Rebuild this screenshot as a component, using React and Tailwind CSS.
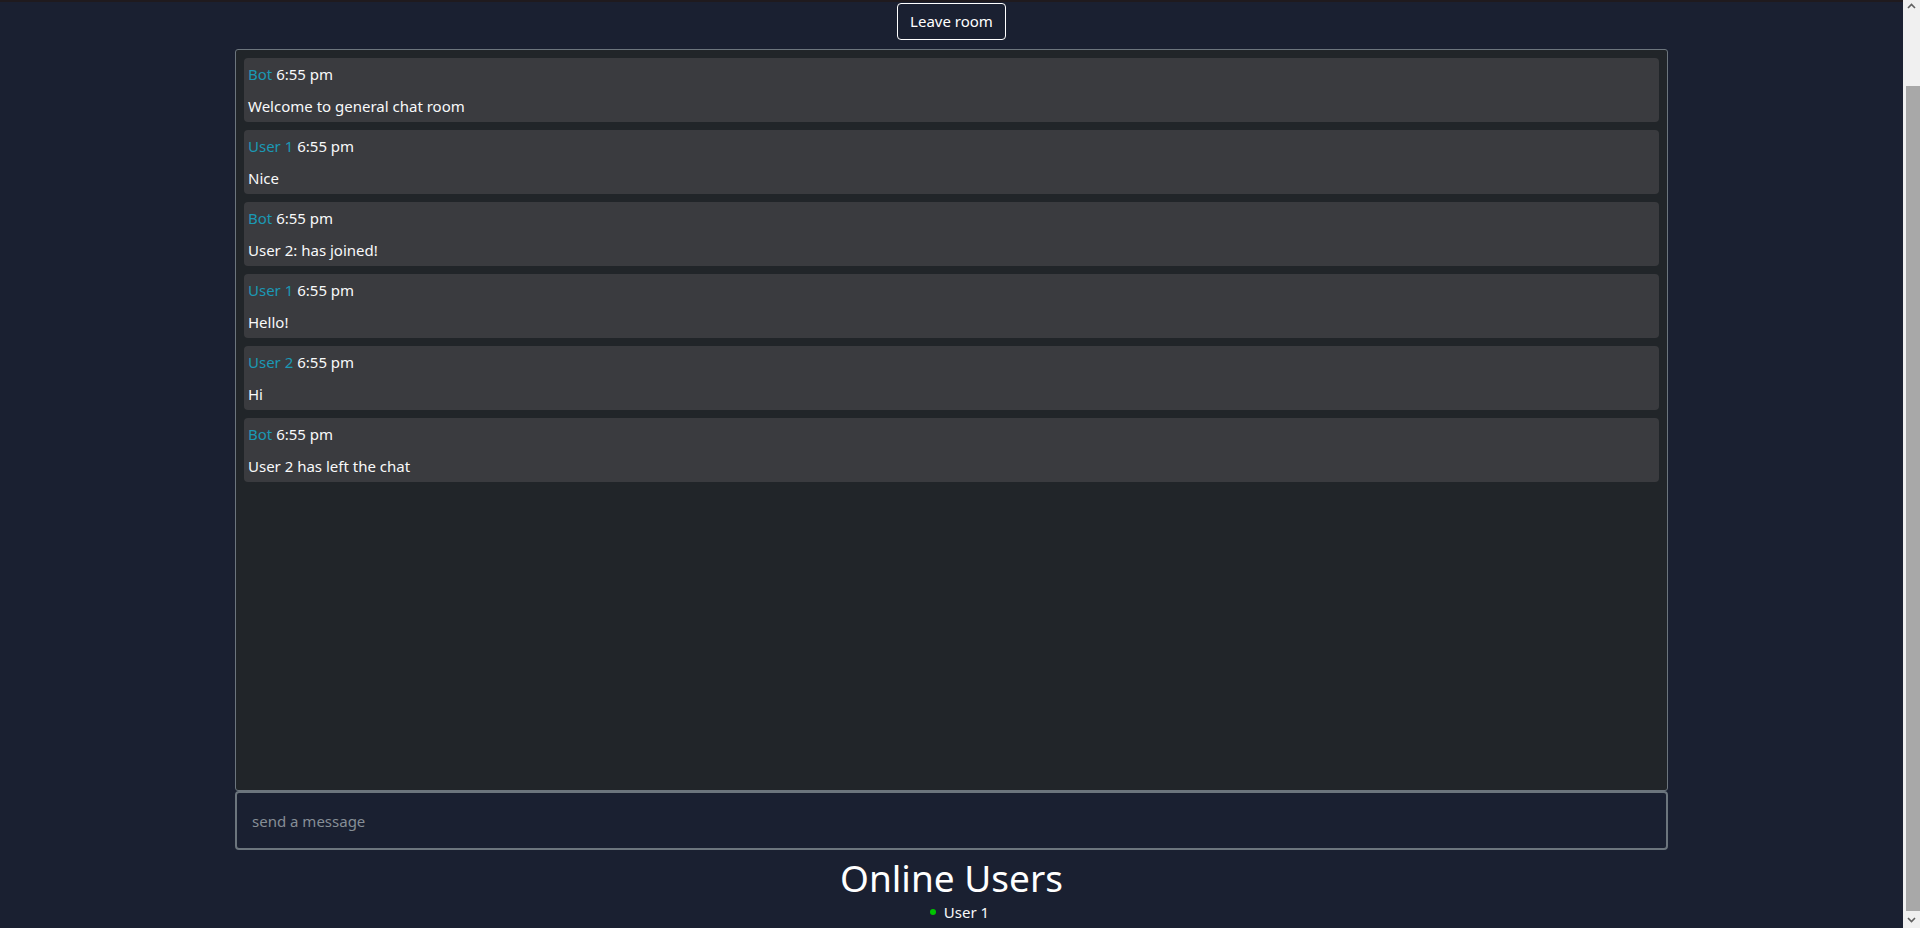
import { useState } from "react";

const messages = [
  { user: "Bot", time: "6:55 pm", text: "Welcome to general chat room" },
  { user: "User 1", time: "6:55 pm", text: "Nice" },
  { user: "Bot", time: "6:55 pm", text: "User 2: has joined!" },
  { user: "User 1", time: "6:55 pm", text: "Hello!" },
  { user: "User 2", time: "6:55 pm", text: "Hi" },
  { user: "Bot", time: "6:55 pm", text: "User 2 has left the chat" },
];

const users = ["User 1"];

// page scrollbar as it shows in the screenshot
const Scrollbar = () => (
  <div className="flex h-[928px] w-[17px] shrink-0 flex-col bg-[#f0f0f0]">
    <div className="flex h-[86px] justify-center pt-[3px]">
      <svg width="9" height="6" viewBox="0 0 9 6" fill="none" stroke="#606060" strokeWidth="1.6">
        <path d="M1 5 L4.5 1.5 L8 5" />
      </svg>
    </div>
    <div className="ml-[3px] flex-1 bg-[#a8a8a8]" />
    <div className="flex h-[17px] items-center justify-center">
      <svg width="9" height="6" viewBox="0 0 9 6" fill="none" stroke="#606060" strokeWidth="1.6">
        <path d="M1 1 L4.5 4.5 L8 1" />
      </svg>
    </div>
  </div>
);

const ChatRoom = () => {
  const [draft, setDraft] = useState("");

  return (
    <div className="flex h-[928px] w-full overflow-hidden bg-[#1a2031] font-['Noto_Sans','Open_Sans',sans-serif] text-[#f8f9fa]">
      <div className="flex flex-1 flex-col items-center border-t-2 border-[#1f1a1e]">
        <button className="mt-px h-[37px] w-[109px] rounded-[4px] border border-white text-[15px] text-white">
          Leave room
        </button>

        <div className="mt-[9px] flex h-[742px] w-[1433px] flex-col gap-2 rounded-[3px] border border-[#6c757d] bg-[#212529] p-[8px]">
          {messages.map((msg, i) => (
            <div key={i} className="flex h-[64px] flex-col gap-2 rounded-[4px] bg-[#3a3b3f] p-1 text-[15px]">
              <div className="h-6 leading-6">
                <span className="text-[#1b98b4]">{msg.user}</span> {msg.time}
              </div>
              <div className="h-6 leading-6">{msg.text}</div>
            </div>
          ))}
        </div>

        <input
          value={draft}
          onChange={(e) => setDraft(e.target.value)}
          placeholder="send a message"
          className="h-[59px] w-[1433px] rounded-[4px] border-2 border-[#6c757d] bg-[#1a2031] px-[15px] text-[15px] text-white outline-none placeholder:text-[#868e96]"
        />

        <h1 className="mt-[4px] text-[37px] font-normal leading-[48px] text-white">Online Users</h1>
        <ul className="ml-4 flex flex-col items-center">
          {users.map((u) => (
            <li key={u} className="flex items-center gap-[8px] text-[15px] leading-[20px]">
              <span className="h-[6px] w-[6px] rounded-full bg-[#00c400]" />
              {u}
            </li>
          ))}
        </ul>
      </div>
      <Scrollbar />
    </div>
  );
};

export default ChatRoom;
